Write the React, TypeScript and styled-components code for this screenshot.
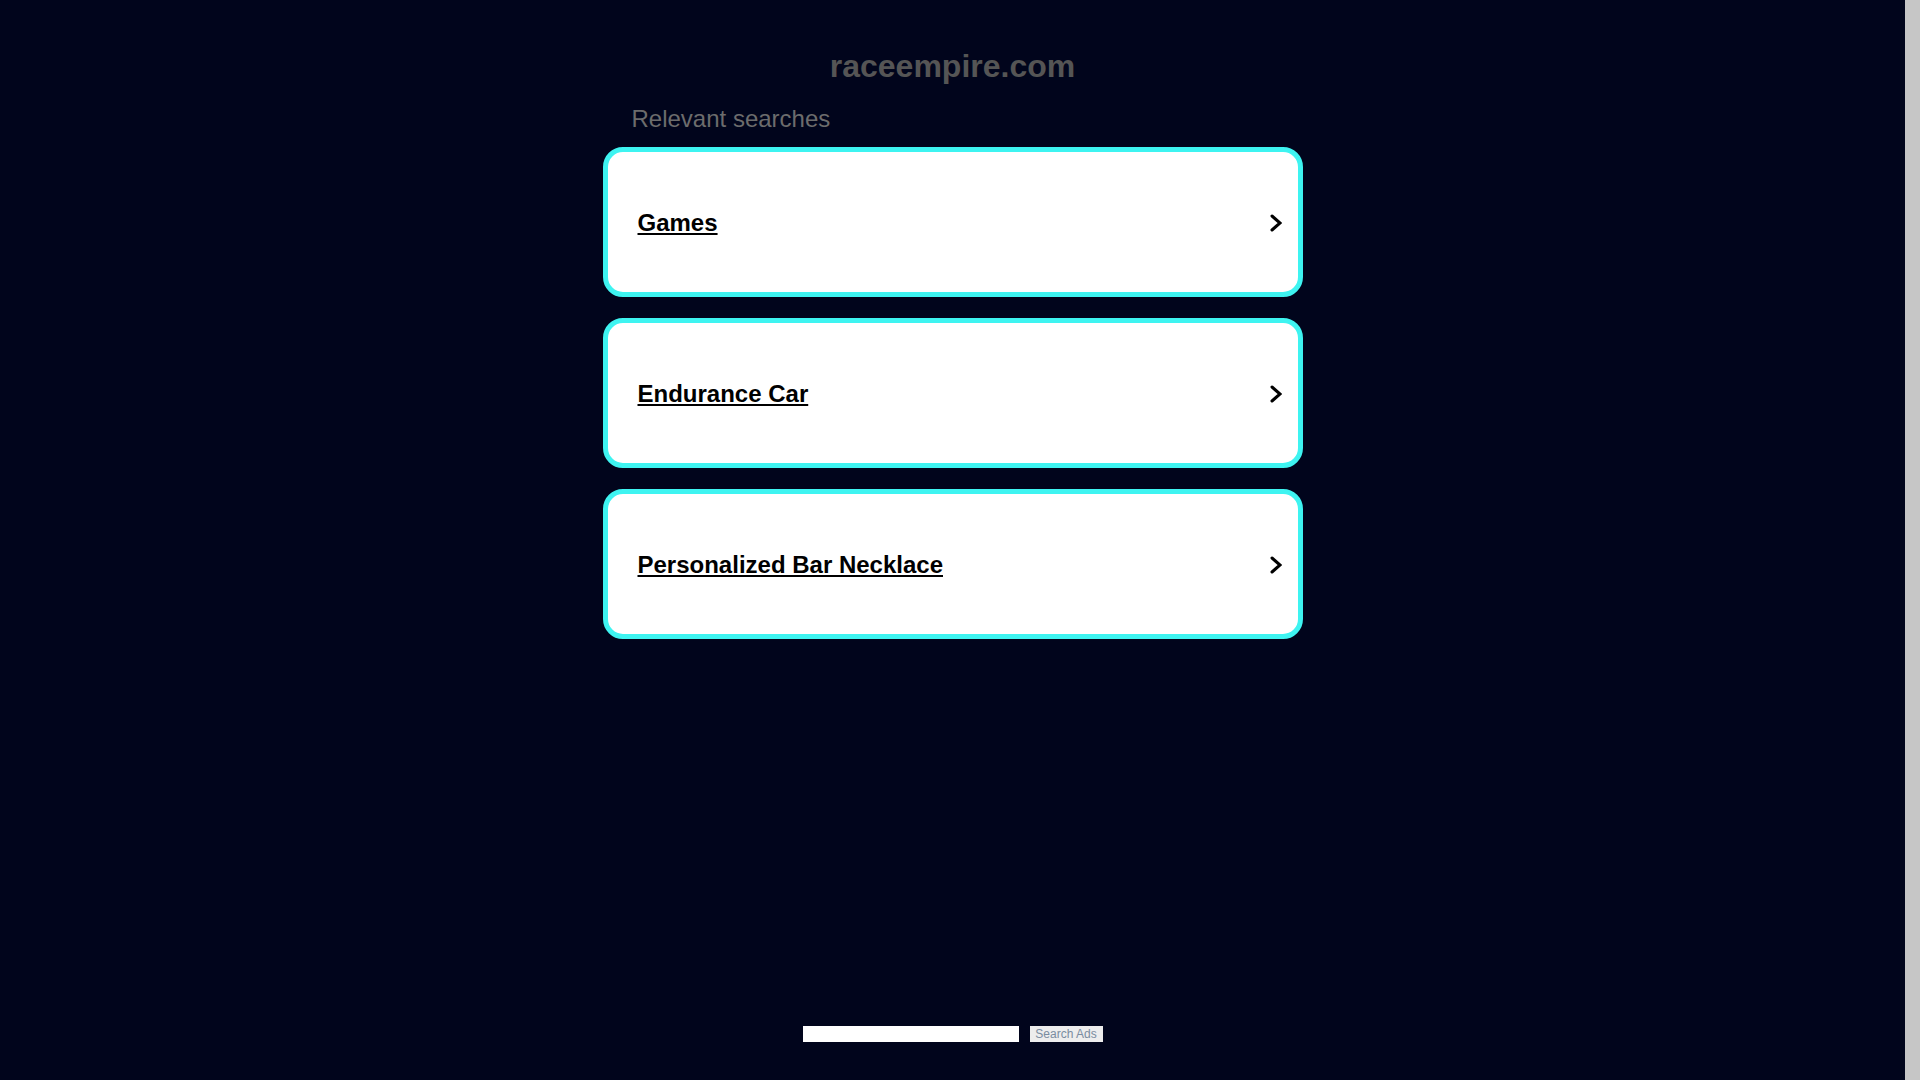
import React, { FC } from "react";
import styled, { createGlobalStyle } from "styled-components";

const GlobalStyle = createGlobalStyle`
  html, body {
    margin: 0;
    padding: 0;
    background-color: #01051c;
    font-family: "Liberation Sans", Arial, sans-serif;
  }
`;

// the reference keeps a 15px scrollbar gutter on the right
const Page = styled.div`
  width: 100%;
  min-height: 1080px;
  display: flex;
  flex-direction: column;
  align-items: center;
  padding-top: 46px;
  box-sizing: border-box;
  border-right: 15px solid #c6c6c6;
`;

const Title = styled.h1`
  margin: 0;
  height: 40px;
  font-size: 32px;
  line-height: 40px;
  font-weight: 700;
  color: #555555;
  text-align: center;
`;

const Container = styled.div`
  width: 700px;
  margin-top: 18px;
`;

const Heading = styled.div`
  height: 30px;
  padding-left: 29px;
  font-size: 24px;
  line-height: 30px;
  color: #6c6c6c;
`;

const List = styled.div`
  margin-top: 13px;
  display: flex;
  flex-direction: column;
  gap: 21px;
`;

const Card = styled.a`
  box-sizing: border-box;
  width: 700px;
  height: 150px;
  border: 5px solid #3ef4f1;
  border-radius: 20px;
  background-color: #ffffff;
  display: flex;
  align-items: center;
  justify-content: space-between;
  padding: 2px 16px 0 30px;
  text-decoration: none;
  cursor: pointer;
`;

const CardText = styled.span`
  font-size: 24px;
  line-height: 30px;
  font-weight: 700;
  color: #000000;
  text-decoration: underline;
  text-underline-offset: 2px;
  text-decoration-thickness: 2px;
`;

const SearchForm = styled.form`
  margin-top: 387px;
  display: flex;
  align-items: center;
  gap: 11px;
`;

const SearchInput = styled.input`
  width: 216px;
  height: 16px;
  box-sizing: border-box;
  border: none;
  padding: 0 4px;
  background-color: #ffffff;
  outline: none;
`;

const SearchButton = styled.button`
  width: 73px;
  height: 16px;
  box-sizing: border-box;
  border: none;
  padding: 0;
  background-color: #ededed;
  color: #7a8ca0;
  font-family: "Liberation Sans", Arial, sans-serif;
  font-size: 12px;
  line-height: 16px;
  cursor: pointer;
`;

const Chevron: FC = () => (
  <svg width="12" height="18" viewBox="0 0 12 18" fill="none">
    <path
      d="M2 2 L10 9 L2 16"
      stroke="#000000"
      strokeWidth="3"
      strokeLinecap="round"
      strokeLinejoin="miter"
    />
  </svg>
);

const searches = ["Games", "Endurance Car", "Personalized Bar Necklace"];

const App: FC = () => (
  <>
    <GlobalStyle />
    <Page>
      <Title>raceempire.com</Title>
      <Container>
        <Heading>Relevant searches</Heading>
        <List>
          {searches.map((s) => (
            <Card key={s}>
              <CardText>{s}</CardText>
              <Chevron />
            </Card>
          ))}
        </List>
      </Container>
      <SearchForm onSubmit={(e) => e.preventDefault()}>
        <SearchInput type="text" />
        <SearchButton type="submit">Search Ads</SearchButton>
      </SearchForm>
    </Page>
  </>
);

export default App;
